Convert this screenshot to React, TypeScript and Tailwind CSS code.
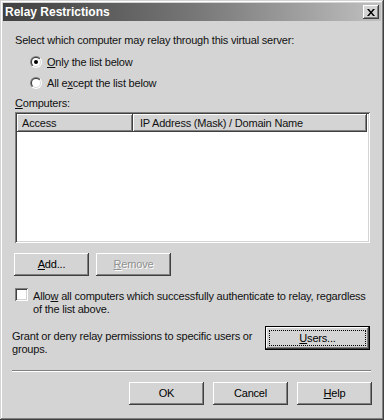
import React from "react";

const font = { fontFamily: '"Liberation Sans", Arial, sans-serif' };

const raised =
  "shadow-[inset_-1px_-1px_#404040,inset_1px_1px_#ffffff,inset_-2px_-2px_#808080,inset_2px_2px_#d4d4d4]";
const sunken =
  "shadow-[inset_1px_1px_#808080,inset_-1px_-1px_#ffffff,inset_2px_2px_#404040,inset_-2px_-2px_#d4d4d4]";

function Radio({ checked }: { checked?: boolean }) {
  return (
    <svg width="12" height="12" viewBox="0 0 12 12" className="shrink-0">
      <defs>
        <linearGradient id="ro" x1="0" y1="0" x2="1" y2="1">
          <stop offset="0.5" stopColor="#808080" />
          <stop offset="0.5" stopColor="#ffffff" />
        </linearGradient>
        <linearGradient id="ri" x1="0" y1="0" x2="1" y2="1">
          <stop offset="0.5" stopColor="#404040" />
          <stop offset="0.5" stopColor="#d4d4d4" />
        </linearGradient>
      </defs>
      <circle cx="6" cy="6" r="6" fill="url(#ro)" />
      <circle cx="6" cy="6" r="5" fill="url(#ri)" />
      <circle cx="6" cy="6" r="4" fill="#ffffff" />
      {checked && <circle cx="6" cy="6" r="2" fill="#000000" />}
    </svg>
  );
}

function Btn({
  children,
  className = "",
  disabled,
  def,
}: {
  children: React.ReactNode;
  className?: string;
  disabled?: boolean;
  def?: boolean;
}) {
  if (def) {
    return (
      <div className={`border border-black bg-[#d4d4d4] ${className}`}>
        <div className={`h-full w-full ${raised} p-[3px]`}>
          <div className="flex h-full w-full items-center justify-center border border-dotted border-black text-[11px] text-black">
            {children}
          </div>
        </div>
      </div>
    );
  }
  return (
    <div
      className={`flex items-center justify-center bg-[#d4d4d4] ${raised} text-[11px] ${
        disabled ? "text-[#909090] [text-shadow:1px_1px_#ffffff]" : "text-black"
      } ${className}`}
    >
      {children}
    </div>
  );
}

export default function App() {
  return (
    <div
      style={font}
      className="w-[384px] h-[420px] bg-[#d4d4d4] p-[3px] shadow-[inset_-1px_-1px_#404040,inset_1px_1px_#d4d4d4,inset_-2px_-2px_#808080,inset_2px_2px_#ffffff] text-[11px] leading-[13px] text-[#111] tracking-[-0.2px] flex flex-col"
    >
      {/* Title bar */}
      <div className="h-[18px] flex items-center justify-between bg-gradient-to-r from-[#404040] via-[#767676] to-[#c0c0c0] pl-[2px] pr-[2px]">
        <span className="text-white font-bold text-[12px] tracking-normal">Relay Restrictions</span>
        <div className={`w-[16px] h-[14px] bg-[#d4d4d4] ${raised} flex items-center justify-center`}>
          <svg width="8" height="7" viewBox="0 0 8 7">
            <path d="M0 0h2l2 2.5L6 0h2L5 3.5 8 7H6L4 4.5 2 7H0l3-3.5z" fill="#000" />
          </svg>
        </div>
      </div>

      {/* Body */}
      <div className="flex flex-col pl-[12px] pr-[10px]">
        <div className="mt-[13px]">Select which computer may relay through this virtual server:</div>

        <div className="mt-[8px] flex flex-col pl-[15px]">
          <div className="h-[14px] flex items-center gap-[5px]">
            <Radio checked />
            <span>
              <u>O</u>nly the list below
            </span>
          </div>
          <div className="mt-[7px] h-[14px] flex items-center gap-[5px]">
            <Radio />
            <span>
              All e<u>x</u>cept the list below
            </span>
          </div>
        </div>

        <div className="mt-[7px]">
          <u>C</u>omputers:
        </div>

        <div className={`mt-[2px] h-[131px] w-[355px] bg-white ${sunken} p-[2px]`}>
          <div className="flex h-[18px]">
            <div className={`w-[116px] bg-[#d4d4d4] ${raised} flex items-center pl-[5px]`}>Access</div>
            <div className={`flex-1 bg-[#d4d4d4] ${raised} flex items-center pl-[7px]`}>
              IP Address (Mask) / Domain Name
            </div>
            <div className="w-[1px]" />
          </div>
        </div>

        <div className="mt-[10px] flex gap-[7px] -ml-[1px]">
          <Btn className="w-[75px] h-[23px]">
            <span>
              <u>A</u>dd...
            </span>
          </Btn>
          <Btn className="w-[75px] h-[23px]" disabled>
            <span>
              <u>R</u>emove
            </span>
          </Btn>
        </div>

        <div className="mt-[12px] flex items-start gap-[5px]">
          <div className={`w-[13px] h-[13px] shrink-0 bg-white ${sunken}`} />
          <div className="mt-[2px]">
            Allo<u>w</u> all computers which successfully authenticate to relay, regardless
            <br />
            of the list above.
          </div>
        </div>

        <div className="mt-[10px] flex items-start justify-between -ml-[3px]">
          <div className="mt-[4px]">
            Grant or deny relay permissions to specific users or
            <br />
            groups.
          </div>
          <Btn def className="w-[105px] h-[24px] mr-[1px]">
            <span>
              <u>U</u>sers...
            </span>
          </Btn>
        </div>

        <div className="mt-[14px] -ml-[3px] w-[359px] h-[2px] border-t border-t-[#808080] border-b border-b-white" />

        <div className="mt-[10px] flex justify-end gap-[9px] mr-[-1px]">
          <Btn className="w-[75px] h-[23px]">OK</Btn>
          <Btn className="w-[75px] h-[23px]">Cancel</Btn>
          <Btn className="w-[75px] h-[23px]">
            <span>
              <u>H</u>elp
            </span>
          </Btn>
        </div>
      </div>
    </div>
  );
}
